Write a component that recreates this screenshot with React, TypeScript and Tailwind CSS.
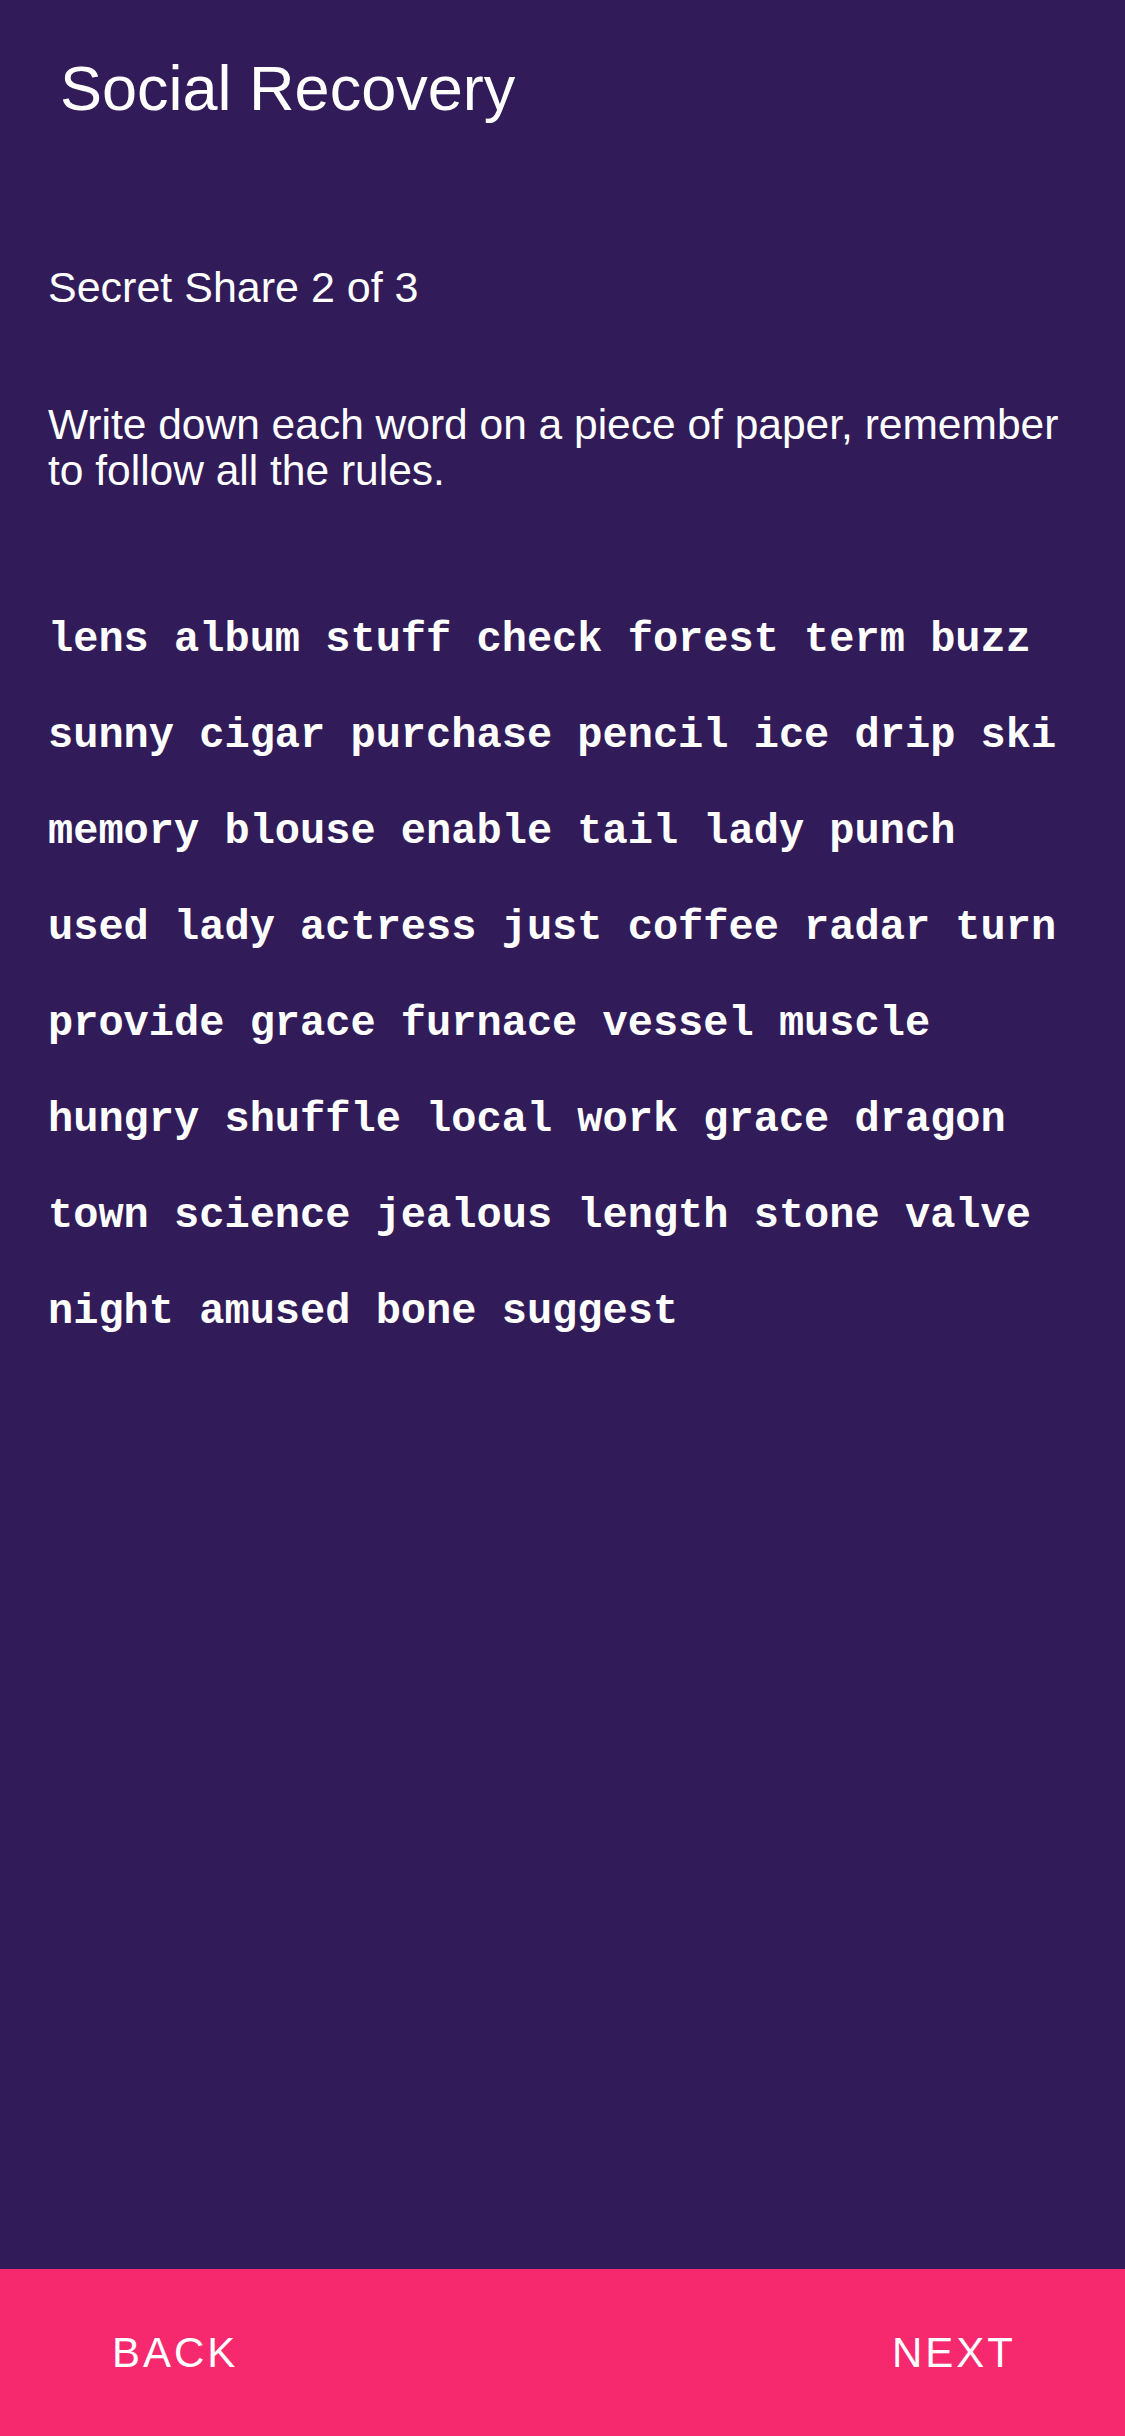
const shareLines = [
  'lens album stuff check forest term buzz',
  'sunny cigar purchase pencil ice drip ski',
  'memory blouse enable tail lady punch',
  'used lady actress just coffee radar turn',
  'provide grace furnace vessel muscle',
  'hungry shuffle local work grace dragon',
  'town science jealous length stone valve',
  'night amused bone suggest',
];

export default function App() {
  return (
    <div className="flex h-[2436px] w-full flex-col bg-[#311c59] font-['Liberation_Sans',Arial,sans-serif] text-white">
      <div className="flex-1">
        <h1 className="pl-[60px] pt-[52px] text-[63px] leading-[72px]">Social Recovery</h1>

        <div className="px-[48px]">
          <h2 className="mt-[139px] text-[43px] leading-[48px]">Secret Share 2 of 3</h2>

          <p className="mt-[91px] text-[42.5px] leading-[46px]">
            Write down each word on a piece of paper, remember to follow all the rules.
          </p>

          <div className="mt-[98px] font-['Liberation_Mono','Courier_New',monospace] text-[42px] font-bold leading-[96px]">
            {shareLines.map((line, index) => (
              <div key={index} className="whitespace-pre">
                {line}
              </div>
            ))}
          </div>
        </div>
      </div>

      <div className="flex h-[167px] items-center justify-between bg-[#f7296e] pl-[112px] pr-[109px]">
        <button className="text-[42px] leading-none tracking-[3px] text-white">BACK</button>
        <button className="text-[42px] leading-none tracking-[3px] text-white">NEXT</button>
      </div>
    </div>
  );
}
